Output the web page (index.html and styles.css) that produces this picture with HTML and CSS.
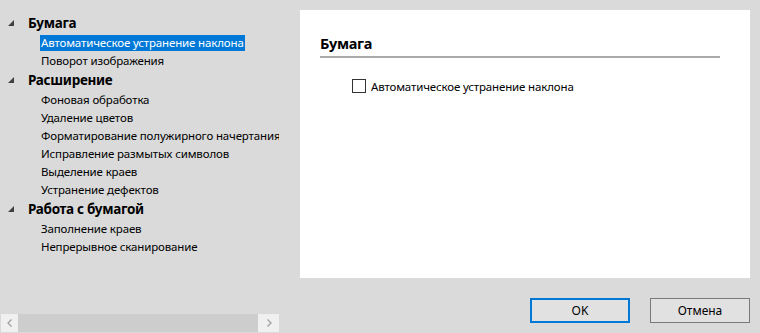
FILE: index.html
```html
<!DOCTYPE html>
<html lang="ru">
<head>
<meta charset="utf-8">
<link rel="stylesheet" href="styles.css">
</head>
<body>
<div class="window">
  <div class="left">
    <div class="tree">
      <div class="group">
        <div class="header"><span class="arrow"></span><span>Бумага</span></div>
        <div class="item"><span class="sel">Автоматическое устранение наклона</span></div>
        <div class="item"><span>Поворот изображения</span></div>
      </div>
      <div class="group">
        <div class="header"><span class="arrow"></span><span>Расширение</span></div>
        <div class="item"><span>Фоновая обработка</span></div>
        <div class="item"><span>Удаление цветов</span></div>
        <div class="item"><span>Форматирование полужирного начертания</span></div>
        <div class="item"><span>Исправление размытых символов</span></div>
        <div class="item"><span>Выделение краев</span></div>
        <div class="item"><span>Устранение дефектов</span></div>
      </div>
      <div class="group">
        <div class="header"><span class="arrow"></span><span>Работа с бумагой</span></div>
        <div class="item"><span>Заполнение краев</span></div>
        <div class="item"><span>Непрерывное сканирование</span></div>
      </div>
    </div>
    <div class="hscroll">
      <div class="sbtn"><svg width="8" height="10" viewBox="0 0 8 10"><path d="M5.5 1.5 L2 5 L5.5 8.5" fill="none" stroke="#a0a0a0" stroke-width="1.3"/></svg></div>
      <div class="track"></div>
      <div class="sbtn wide"><svg width="8" height="10" viewBox="0 0 8 10"><path d="M2.5 1.5 L6 5 L2.5 8.5" fill="none" stroke="#a0a0a0" stroke-width="1.3"/></svg></div>
    </div>
  </div>
  <div class="right">
    <div class="panel">
      <div class="ptitle">Бумага</div>
      <label class="check"><span class="box"></span><span>Автоматическое устранение наклона</span></label>
    </div>
    <div class="buttons">
      <button class="btn default">OK</button>
      <button class="btn">Отмена</button>
    </div>
  </div>
</div>
</body>
</html>
```
FILE: styles.css
```css
* { box-sizing: border-box; }
html, body { margin: 0; padding: 0; }
body {
  width: 760px;
  height: 333px;
  background: #dadada;
  font-family: "Noto Sans", "Open Sans", sans-serif;
  font-size: 11.5px;
  letter-spacing: -0.15px;
  color: #000;
  overflow: hidden;
}
.window {
  display: flex;
  height: 333px;
}
.left {
  width: 300px;
  display: flex;
  flex-direction: column;
}
.tree {
  flex: 1;
  padding-top: 13px;
  overflow: hidden;
}
.header {
  height: 21px;
  display: flex;
  align-items: center;
  font-weight: bold;
  font-size: 13.5px;
  letter-spacing: -0.3px;
  padding-bottom: 1px;
}
.arrow {
  width: 0;
  height: 0;
  margin-left: 8px;
  margin-right: 14px;
  border-left: 6px solid transparent;
  border-bottom: 6px solid #404040;
}
.item {
  height: 18px;
  display: flex;
  align-items: center;
  padding-left: 40px;
  white-space: nowrap;
  overflow: hidden;
  width: 279px;
}
.item span { padding: 0 1px; line-height: 16px; }
.item .sel {
  background: #0078d7;
  color: #fff;
}
.hscroll {
  display: flex;
  height: 18px;
  width: 278px;
  margin: 0 0 1px 1px;
  background: #cdcdcd;
}
.sbtn {
  flex: 0 0 17px;
  background: #f0f0f0;
  display: flex;
  align-items: center;
  justify-content: center;
}
.sbtn.wide { flex-basis: 21px; }
.track { flex: 1 1 auto; }
.right {
  flex: 1;
  display: flex;
  flex-direction: column;
  padding: 10px 10px 0 0;
}
.panel {
  background: #fff;
  height: 268px;
  padding: 23px 30px 0 20px;
}
.ptitle {
  font-size: 14.5px;
  letter-spacing: -0.3px;
  font-weight: bold;
  line-height: 20px;
  padding-bottom: 3px;
  border-bottom: 2px solid #a9a9a9;
}
.check {
  display: flex;
  align-items: center;
  margin: 20px 0 0 32px;
  height: 16px;
}
.box {
  width: 14px;
  height: 14px;
  border: 1px solid #333;
  background: #fff;
  margin-right: 5px;
}
.buttons {
  display: flex;
  justify-content: flex-end;
  gap: 20px;
  padding-top: 20px;
}
.btn {
  width: 100px;
  height: 25px;
  background: #e1e1e1;
  border: 1px solid #7a7a7a;
  font-family: inherit;
  font-size: 12px;
  letter-spacing: 0;
  color: #000;
  padding: 0;
}
.btn.default { border: 2px solid #0078d7; }
```
